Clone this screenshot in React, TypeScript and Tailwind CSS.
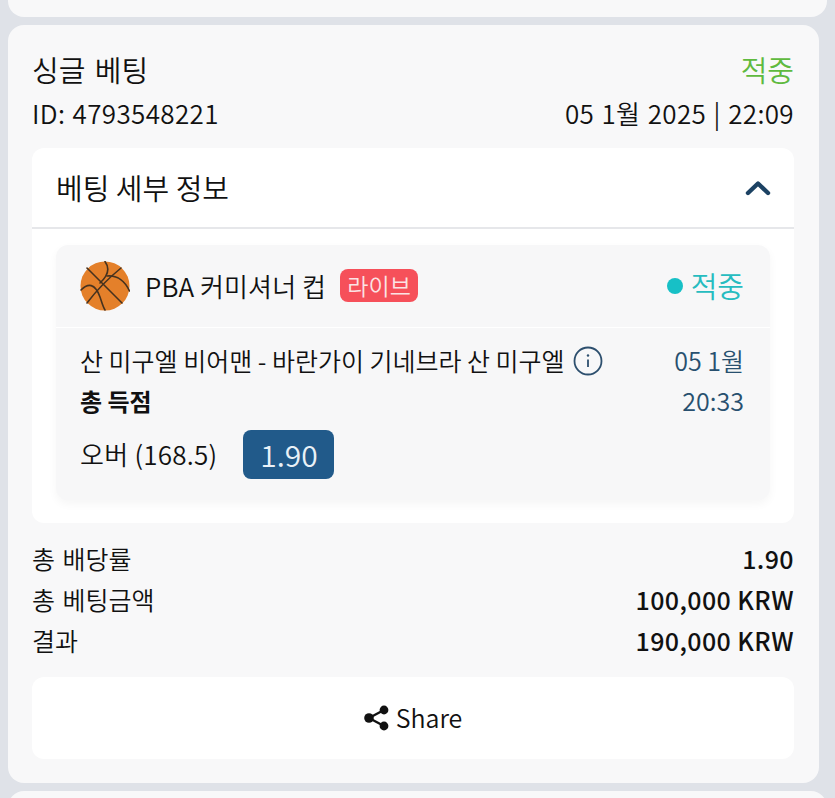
const Basketball = () => (
  <svg viewBox="0 0 50 50" className="h-[50px] w-[50px] shrink-0">
    <circle cx="25" cy="25" r="24.5" fill="#e4802a" />
    <g fill="none" stroke="#46321f" strokeWidth="1.6" strokeLinecap="round">
      <path d="M7 7 L42 42" />
      <path d="M7 42 C16 30 30 16 41 7" />
      <path d="M25 0.5 C29 6 30 13 20 22" />
      <path d="M1 29 C8 22 15 22 20 36 C22 42 23 46 25 49" />
      <path d="M49.5 30 C45 20 37 14 27 15" />
    </g>
  </svg>
);

const ShareIcon = () => (
  <svg viewBox="0 0 26 26" className="h-[26px] w-[26px]" fill="#111">
    <circle cx="5" cy="13" r="4.8" />
    <circle cx="20" cy="5" r="4.4" />
    <circle cx="20" cy="21" r="4.4" />
    <path d="M5 13 L20 5 M5 13 L20 21" stroke="#111" strokeWidth="2.4" />
  </svg>
);

const InfoIcon = () => (
  <svg viewBox="0 0 30 30" className="h-[30px] w-[30px] shrink-0" fill="none">
    <circle cx="15" cy="15" r="13.5" stroke="#2d4f6e" strokeWidth="1.8" />
    <circle cx="15" cy="9.5" r="1.2" fill="#2d4f6e" />
    <path d="M15 13.5 V21" stroke="#2d4f6e" strokeWidth="1.8" />
  </svg>
);

const Chevron = () => (
  <svg viewBox="0 0 26 16" className="h-[16px] w-[26px]" fill="none">
    <path d="M3 13 L13 3.5 L23 13" stroke="#1c4263" strokeWidth="4.4" strokeLinecap="round" strokeLinejoin="round" />
  </svg>
);

const summary = [
  { label: "총 배당률", value: "1.90" },
  { label: "총 베팅금액", value: "100,000 KRW" },
  { label: "결과", value: "190,000 KRW" },
];

export default function App() {
  return (
    <div
      className="flex h-[798px] flex-col gap-2 overflow-hidden bg-[#dfe2e8] px-2 font-[350] text-[#111]"
      style={{ fontFamily: '"Noto Sans CJK KR", "Noto Sans", sans-serif' }}
    >
      <div className="h-[17px] shrink-0 rounded-b-2xl bg-[#f8f8f9]" />

      <div className="mr-[8px] h-[758px] shrink-0 rounded-2xl bg-[#f8f8f9] pl-6 pr-[25px] pt-[24px]">
        <div className="flex h-[41px] items-center justify-between text-[29px] [word-spacing:3px]">
          <span>싱글 베팅</span>
          <span className="text-[#5fba3f]">적중</span>
        </div>
        <div className="mt-[4px] flex h-[36px] items-center justify-between text-[26px] tracking-[0.35px] [word-spacing:1.2px]">
          <span>ID: 4793548221</span>
          <span>05 1월 2025 | 22:09</span>
        </div>

        <div className="mt-[18px] h-[375px] rounded-xl bg-white">
          <div className="flex h-[81px] items-center justify-between border-b-2 border-[#e6e7ea] pl-6 pr-[23px] text-[29px]">
            <span>베팅 세부 정보</span>
            <Chevron />
          </div>

          <div className="px-6 pt-4">
            <div className="h-[255px] w-[714px] rounded-xl bg-[#f7f7f8] shadow-[0_4px_10px_rgba(0,0,0,0.04)]">
              <div className="flex h-[83px] items-center justify-between border-b border-white pl-6 pr-[26px]">
                <div className="flex items-center">
                  <Basketball />
                  <span className="ml-[15px] -translate-y-px text-[26px] tracking-[0.1px]">PBA 커미셔너 컵</span>
                  <span className="ml-[14px] flex h-[33px] w-[78px] -translate-y-px items-center justify-center rounded-lg bg-[#f6505a] text-[23px] text-[#fbe3e4]">
                    라이브
                  </span>
                </div>
                <div className="flex items-center gap-[8px] text-[29px] text-[#26bcc0]">
                  <span className="h-4 w-4 rounded-full bg-[#17c0c6]" />
                  <span>적중</span>
                </div>
              </div>

              <div className="flex justify-between pl-6 pr-[26px] pt-[13px]">
                <div>
                  <div className="flex h-[40px] items-center gap-[8px] text-[25px]">
                    <span>산 미구엘 비어맨 - 바란가이 기네브라 산 미구엘</span>
                    <InfoIcon />
                  </div>
                  <div className="flex h-[40px] items-center text-[24px] font-bold">총 득점</div>
                  <div className="mt-[9px] flex items-center">
                    <span className="-translate-y-px text-[26px] tracking-[0.25px]">오버 (168.5)</span>
                    <span className="ml-[26px] flex h-[49px] w-[91px] items-center justify-center rounded-lg bg-[#215a8a] text-[30px] text-[#e9f1f7]">
                      1.90
                    </span>
                  </div>
                </div>
                <div className="text-right text-[25px] text-[#28506f]">
                  <div className="flex h-[40px] items-center justify-end">05 1월</div>
                  <div className="flex h-[40px] items-center justify-end">20:33</div>
                </div>
              </div>
            </div>
          </div>
        </div>

        <div className="mt-[15px] flex flex-col">
          {summary.map((row) => (
            <div key={row.label} className="flex h-[41px] items-center justify-between text-[25px]">
              <span className="[word-spacing:2px]">{row.label}</span>
              <span className="font-medium tracking-[0.4px]">{row.value}</span>
            </div>
          ))}
        </div>

        <button
          type="button"
          className="mt-[16px] flex h-[82px] w-full items-center justify-center gap-[6px] rounded-xl bg-white text-[25px]"
        >
          <ShareIcon />
          <span>Share</span>
        </button>
      </div>

      <div className="h-[20px] shrink-0 rounded-t-2xl bg-[#f8f8f9]" />
    </div>
  );
}
